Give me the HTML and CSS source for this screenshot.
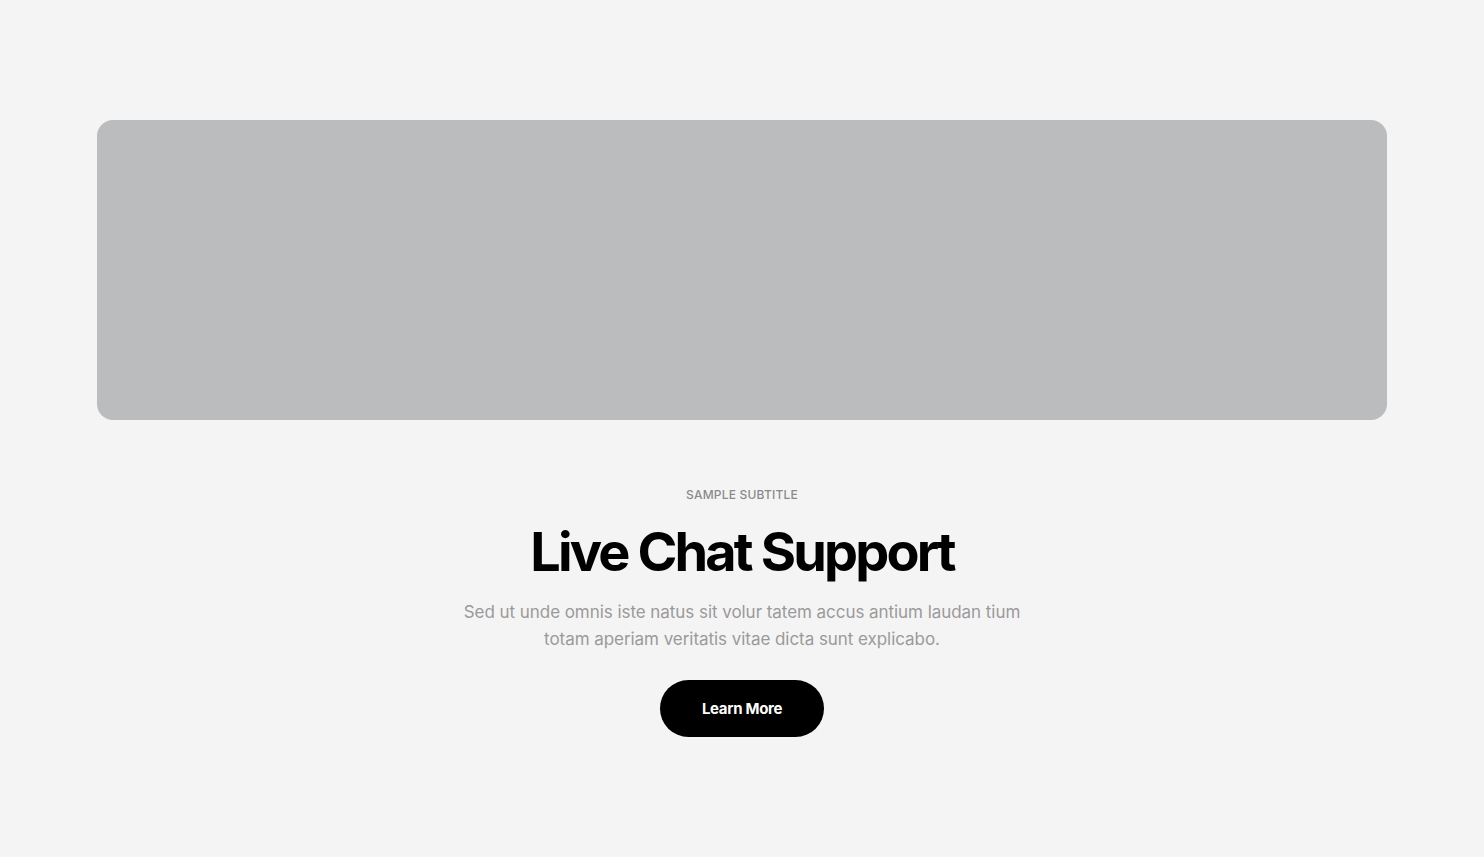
FILE: index.html
```html
<!DOCTYPE html>
<html lang="en">
<head>
<meta charset="utf-8">
<title>Live Chat Support</title>
<link rel="stylesheet" href="styles.css">
</head>
<body>
<section class="feature">
  <div class="media"></div>
  <div class="content">
    <p class="subtitle">SAMPLE SUBTITLE</p>
    <h1 class="title">Live Chat Support</h1>
    <p class="text">Sed ut unde omnis iste natus sit volur tatem accus antium laudan tium totam aperiam veritatis vitae dicta sunt explicabo.</p>
    <a class="btn" href="#">Learn More</a>
  </div>
</section>
</body>
</html>
```

FILE: styles.css
```css
* { box-sizing: border-box; }
html, body { margin: 0; padding: 0; }
body {
  background: #f4f4f4;
  font-family: Inter, "Noto Sans", sans-serif;
  width: 1484px;
  height: 857px;
  overflow: hidden;
}
.feature {
  padding: 120px 97px 0;
  display: flex;
  flex-direction: column;
  align-items: center;
}
.media {
  width: 1290px;
  height: 300px;
  background: #bbbcbe;
  border-radius: 16px;
}
.content {
  display: flex;
  flex-direction: column;
  align-items: center;
  text-align: center;
  padding-top: 67px;
}
.subtitle {
  margin: 0;
  font-size: 12px;
  line-height: 16px;
  color: #8a8a8a;
  font-weight: 500;
  letter-spacing: 0.2px;
}
.title {
  margin: 18px 0 0;
  font-size: 54px;
  line-height: 62px;
  font-weight: 700;
  letter-spacing: -2.85px;
  color: #000;
}
.text {
  margin: 16px 0 0;
  width: 600px;
  font-size: 17px;
  line-height: 27px;
  color: #9a9a9a;
  letter-spacing: -0.05px;
}
.btn {
  margin-top: 27px;
  display: flex;
  align-items: center;
  justify-content: center;
  width: 164px;
  height: 57px;
  border-radius: 29px;
  background: #000;
  color: #fff;
  font-size: 15px;
  font-weight: 700;
  text-decoration: none;
  letter-spacing: -0.3px;
}
```
